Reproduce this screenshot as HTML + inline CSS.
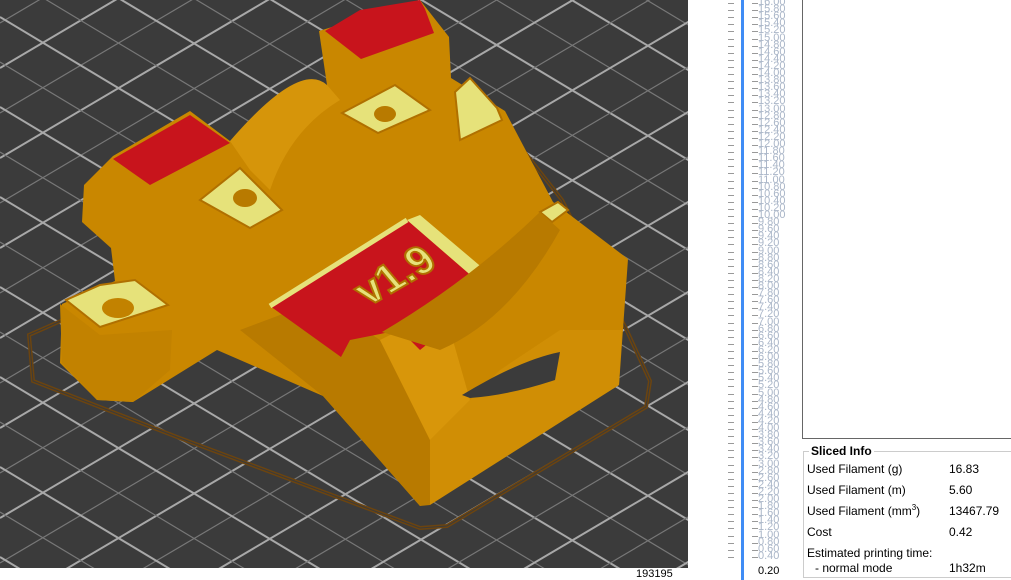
<!DOCTYPE html>
<html><head><style>
html,body{margin:0;width:1011px;height:580px;overflow:hidden}
body{background:#fff;font-family:"Liberation Sans",sans-serif;position:relative}
#vp{position:absolute;left:0;top:0;width:688px;height:568px;background:#3b3b3b;overflow:hidden}
.t{position:absolute;font-size:12px;line-height:14px;color:#000;white-space:nowrap}
#sl{position:absolute;left:700px;top:0;width:100px;height:580px;overflow:hidden}
.lab{position:absolute;left:58px;font-size:11px;color:#aab6c8;line-height:11px}
.tk{position:absolute;width:6px;height:1px;background:#999}
</style></head><body>
<div id="vp">
<svg width="688" height="568" viewBox="0 0 688 568">
<g id="grid"></g>
<polygon points="29,335 33,381 177,437 420,528 447,526 646,407 650,381 628,333 562,200 504,126" fill="none" stroke="#6b4410" stroke-width="4"/>
<polygon points="29,335 33,381 177,437 420,528 447,526 646,407 650,381 628,333 562,200 504,126" fill="none" stroke="#3b3b3b" stroke-width="1"/>
<polygon points="62,304 60,363 97,400 133,402 217,350 323,396 420,506 619,385 628,259 553,202 505,111 451,78 449,37 420,0 319,31 327,85 230,141 190,111 113,156 84,185 82,222 111,248 115,281" fill="#c98700"/>
<polygon points="323,396 420,506 430,505 430,440 380,340 320,300 240,330" fill="#b87a00"/>
<polygon points="430,440 430,505 619,385 622,330 560,330 500,370" fill="#d08e05"/>
<polygon points="60,304 62,363 97,400 133,402 170,370 172,330 100,335" fill="#c28200"/>
<polygon points="380,340 430,440 470,400 450,330 400,330" fill="#d8960a"/>
<polygon points="325,31 361,59 434,33 425,9 420,0 360,10" fill="#c8141c"/>
<polygon points="113,159 150,185 230,143 190,115" fill="#c8141c"/>
<polygon points="270,306 341,357 350,340 400,330 420,350 482,300 482,285 407,220" fill="#c8141c"/>
<polygon points="66,300 100,327 168,305 135,280 100,285" fill="#e6e27a" stroke="#b07000" stroke-width="2"/>
<ellipse cx="118" cy="308" rx="16" ry="10" fill="#c28200"/>
<polygon points="200,200 250,228 282,210 240,168" fill="#e6e27a" stroke="#b07000" stroke-width="2"/>
<ellipse cx="245" cy="198" rx="12" ry="9" fill="#b87a00"/>
<polygon points="342,113 378,133 430,110 395,85" fill="#e6e27a" stroke="#b07000" stroke-width="2"/>
<ellipse cx="385" cy="114" rx="11" ry="8" fill="#b87a00"/>
<polygon points="455,92 460,140 502,120 497,108 470,78" fill="#e6e27a" stroke="#b07000" stroke-width="2"/>
<polygon points="540,212 552,222 568,210 558,202" fill="#e6e27a" stroke="#b07000" stroke-width="2"/>
<polygon points="407,220 482,285 485,270 420,215" fill="#e6e27a"/>
<path d="M270,306 L407,220" stroke="#e6e27a" stroke-width="5"/>
<text x="305" y="320" font-family="Liberation Sans" font-weight="bold" font-size="42" fill="#e6e27a" stroke="#b07000" stroke-width="2" transform="rotate(-30 340 300) skewX(10)">v1.9</text>
<path d="M462,395 Q520,360 560,352 L555,380 Q510,395 470,398 Z" fill="#3b3b3b"/>
<path d="M230,141 Q300,60 327,85 L340,100 Q290,130 270,190 L250,170 Z" fill="#d6950a"/>
<path d="M382,332 Q470,280 540,212 L560,230 Q510,320 440,350 Z" fill="#b87a00"/>
</svg>
</div>
<div class="t" style="left:636px;top:568px;font-size:11px;line-height:12px">193195</div>
<div style="position:absolute;left:741px;top:0;width:3px;height:580px;background:#3f8cf5"></div>
<div id="sl"></div>
<div style="position:absolute;left:802px;top:0;width:1px;height:438px;background:#666"></div>
<div style="position:absolute;left:802px;top:438px;width:209px;height:1px;background:#666"></div>
<div style="position:absolute;left:803px;top:451px;width:208px;height:127px;border:1px solid #ccc;border-right:none;box-sizing:border-box"></div>
<div class="t" style="left:809px;top:444px;font-weight:bold;background:#fff;padding:0 2px">Sliced Info</div>
<div class="t" style="left:807px;top:462px">Used Filament (g)</div><div class="t" style="left:949px;top:462px">16.83</div>
<div class="t" style="left:807px;top:483px">Used Filament (m)</div><div class="t" style="left:949px;top:483px">5.60</div>
<div class="t" style="left:807px;top:504px">Used Filament (mm<sup style="font-size:8px;line-height:0">3</sup>)</div><div class="t" style="left:949px;top:504px">13467.79</div>
<div class="t" style="left:807px;top:525px">Cost</div><div class="t" style="left:949px;top:525px">0.42</div>
<div class="t" style="left:807px;top:546px">Estimated printing time:</div>
<div class="t" style="left:815px;top:561px">- normal mode</div><div class="t" style="left:949px;top:561px">1h32m</div>
<script>
var g=document.getElementById('grid'),s='';
for(var i=-14;i<24;i++){
var maj=(((i%2)+2)%2==0);
var st=maj?'stroke="#a8a8a8" stroke-width="2"':'stroke="#777" stroke-width="1.2"';
var b=68+i*45;
s+='<line '+st+' x1="0" y1="'+b+'" x2="700" y2="'+(b-0.59*700)+'"/>';
var c=107+(i-8)*45;
s+='<line '+st+' x1="0" y1="'+c+'" x2="700" y2="'+(c+0.6*700)+'"/>';}
g.innerHTML=s;
var sl=document.getElementById('sl'),h='';
for(var y=3,k=0;y<560;y+=7.1,k++){h+='<div class="tk" style="left:28px;top:'+y+'px"></div><div class="tk" style="left:52px;top:'+y+'px"></div>';
var v=(16-k*0.2);if(v<0.4)v=0.4;h+='<div class="lab" style="top:'+(y-6)+'px">'+v.toFixed(2)+'</div>';}
h+='<div class="lab" style="top:566px;color:#000;background:#fff">0.20</div>';
sl.innerHTML=h;
</script>
</body></html>
